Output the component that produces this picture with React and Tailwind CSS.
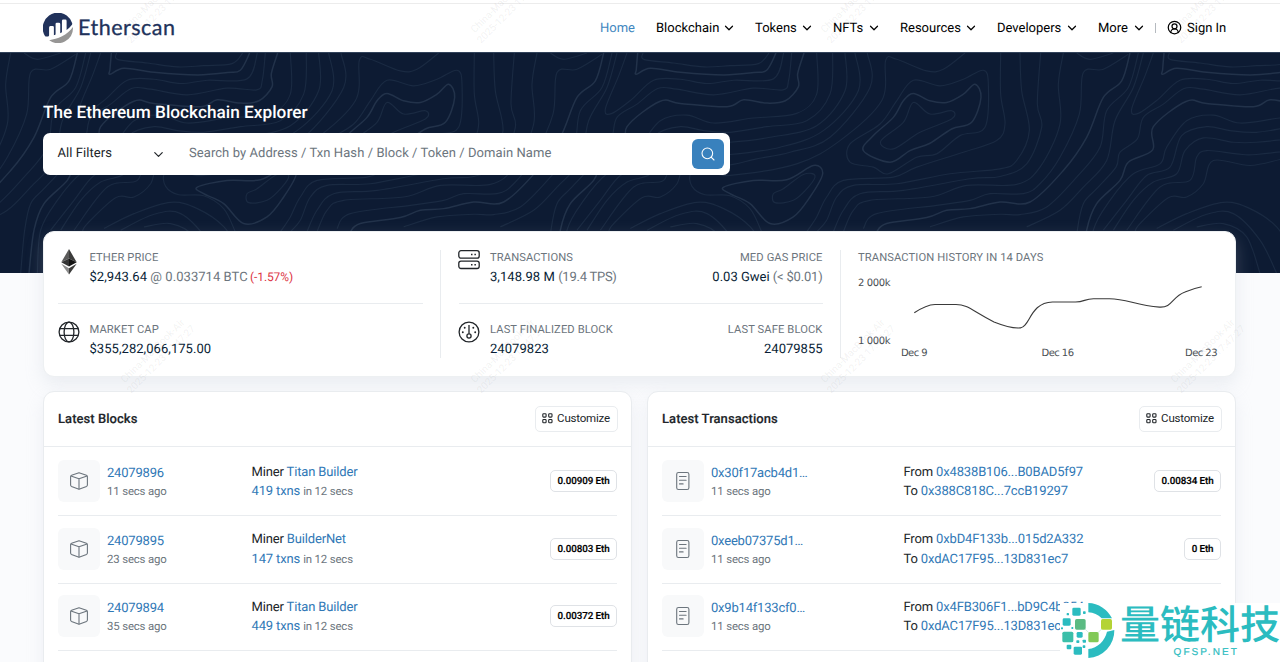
import React from 'react'
import { ChevronDown, CircleUserRound, Search } from 'lucide-react'

const NAV = [
  { label: 'Blockchain', width: 'w-[62px]' },
  { label: 'Tokens', width: 'w-[41px]' },
  { label: 'NFTs', width: 'w-[30px]' },
  { label: 'Resources', width: 'w-[60px]' },
  { label: 'Developers', width: 'w-[64px]' },
  { label: 'More', width: 'w-[30px]' },
]

const BLOCKS = [
  { number: '24079896', age: '11 secs ago', miner: 'Titan Builder', txns: '419 txns', reward: '0.00909 Eth' },
  { number: '24079895', age: '23 secs ago', miner: 'BuilderNet', txns: '147 txns', reward: '0.00803 Eth' },
  { number: '24079894', age: '35 secs ago', miner: 'Titan Builder', txns: '449 txns', reward: '0.00372 Eth' },
]

const TRANSACTIONS = [
  { hash: '0x30f17acb4d1…', age: '11 secs ago', from: '0x4838B106...B0BAD5f97', to: '0x388C818C...7ccB19297', value: '0.00834 Eth' },
  { hash: '0xeeb07375d1…', age: '11 secs ago', from: '0xbD4F133b...015d2A332', to: '0xdAC17F95...13D831ec7', value: '0 Eth' },
  { hash: '0x9b14f133cf0…', age: '11 secs ago', from: '0x4FB306F1...bD9C4b354', to: '0xdAC17F95...13D831ec7', value: null },
]

// Contour lines of one map tile. bold marks the index contours.
const TILE = 1579
const CONTOURS = [
  { pts: [1318, 6, 1322, 26, 1410, 36, 1500, 48, 1579, 44, 1664, 38, 1696, 6] },
  { bold: true, pts: [1302, 6, 1298, 55, 1298, 70, 1340, 52, 1430, 64, 1560, 72, 1650, 65, 1689, 58, 1717, 6] },
  { pts: [1270, 6, 1245, 75, 1205, 175, 1225, 188, 1285, 145, 1350, 88, 1430, 85, 1510, 98, 1590, 88, 1709, 84, 1740, 6] },
  { pts: [1764, 6, 1755, 88, 1738, 117, 1649, 112, 1530, 132, 1420, 115, 1362, 113, 1300, 160, 1240, 200, 1222, 265, 1170, 305, 1158, 350, 1100, 415, 1060, 460, 1042, 540, 1030, 670] },
  { bold: true, pts: [1801, 6, 1782, 68, 1784, 108, 1745, 150, 1689, 157, 1620, 147, 1570, 168, 1430, 158, 1368, 152, 1270, 228, 1268, 298, 1195, 335, 1170, 390, 1100, 460, 1070, 540, 1055, 670] },
  { pts: [1839, 6, 1839, 130, 1779, 188, 1649, 202, 1530, 217, 1450, 193, 1370, 210, 1310, 290, 1290, 340, 1210, 370, 1140, 450, 1090, 540, 1080, 670] },
  { pts: [1887, 6, 1879, 130, 1809, 210, 1689, 228, 1579, 245, 1500, 240, 1430, 228, 1355, 255, 1320, 350, 1250, 375, 1190, 450, 1120, 540] },
  { pts: [1924, 6, 1924, 120, 1839, 225, 1699, 260, 1579, 275, 1510, 275, 1420, 262, 1365, 300, 1340, 370, 1270, 395, 1210, 450, 1150, 540] },
  { pts: [1954, 6, 1964, 120, 1859, 240, 1729, 290, 1579, 312, 1520, 310, 1430, 300, 1400, 320, 1380, 390, 1290, 410, 1190, 540] },
  { pts: [1991, 6, 1999, 110, 1879, 260, 1759, 305, 1659, 325, 1560, 345, 1450, 330, 1420, 400, 1370, 440, 1315, 442, 1230, 520, 1215, 545] },
  { pts: [705, 6, 640, 55, 590, 60, 500, 25, 467, 28, 455, 150, 330, 270, 200, 340, 0, 375, -50, 365, -115, 368, -114, 408, -75, 433, 0, 436, 60, 475, 95, 545] },
  { bold: true, closed: true, pts: [-19, 410, 70, 390, 170, 388, 250, 345, 278, 370, 240, 440, 190, 500, 120, 520, 60, 460, 0, 430] },
  { closed: true, pts: [130, 430, 160, 415, 220, 372, 255, 375, 235, 410, 190, 450, 135, 457] },
  { pts: [1280, 535, 1370, 490, 1480, 456, 1560, 475, 1640, 530, 1680, 600, 1710, 670] },
  { pts: [1330, 540, 1430, 492, 1510, 490, 1590, 570, 1640, 670] },
  { pts: [1400, 530, 1480, 520, 1550, 560, 1590, 670] },
  { bold: true, closed: true, pts: [550, 128, 600, 150, 650, 155, 700, 130, 735, 100, 753, 140, 725, 215, 665, 235, 600, 278, 540, 300, 480, 335, 400, 300, 430, 255, 490, 200, 520, 150] },
  { closed: true, pts: [550, 155, 600, 190, 665, 180, 665, 205, 570, 245, 490, 295, 452, 272, 520, 215] },
  { closed: true, pts: [550, 88, 630, 105, 700, 85, 760, 58, 775, 100, 765, 230, 690, 255, 620, 310, 560, 320, 475, 370, 430, 350, 360, 335, 360, 280, 450, 220, 500, 150] },
  { pts: [812, 6, 812, 130, 825, 220, 800, 270, 700, 305, 560, 350, 490, 380, 340, 390, 290, 440, 260, 500, 230, 545] },
  { pts: [870, 6, 875, 120, 898, 240, 860, 330, 810, 355, 660, 370, 500, 400, 370, 405, 320, 440, 290, 510, 260, 545] },
  { pts: [932, 6, 922, 160, 935, 230, 890, 340, 810, 378, 720, 385, 520, 420, 390, 430, 340, 480, 310, 545] },
  { pts: [1000, 6, 985, 100, 990, 220, 930, 350, 860, 402, 710, 405, 600, 440, 420, 450, 370, 480, 340, 545] },
  { pts: [1195, 10, 1120, 55, 1060, 65, 1048, 190, 990, 320, 930, 400, 880, 430, 780, 430, 720, 450, 620, 465, 440, 490, 400, 535] },
  { bold: true, pts: [1200, 6, 1175, 90, 1120, 140, 1070, 260, 1000, 360, 900, 455, 810, 455, 720, 475, 650, 480, 590, 502, 470, 520, 440, 545] },
  { pts: [1225, 6, 1195, 110, 1130, 180, 1110, 290, 1040, 380, 950, 470, 870, 493, 810, 492, 700, 500, 600, 530] },
  { pts: [1240, 6, 1210, 110, 1155, 210, 1130, 330, 1060, 410, 990, 480, 890, 530] },
  { pts: [1040, 6, 1080, 25, 1150, 6] },
]

function smooth({ pts, closed }) {
  const n = pts.length / 2
  const at = i => {
    const k = closed ? (i + n) % n : Math.min(Math.max(i, 0), n - 1)
    return [pts[k * 2], pts[k * 2 + 1]]
  }
  let d = `M${at(0).join(' ')}`
  for (let i = 0; i < (closed ? n : n - 1); i++) {
    const [a, b, c, e] = [at(i - 1), at(i), at(i + 1), at(i + 2)]
    d += `C${b[0] + (c[0] - a[0]) / 6} ${b[1] + (c[1] - a[1]) / 6} ${c[0] - (e[0] - b[0]) / 6} ${c[1] - (e[1] - b[1]) / 6} ${c[0]} ${c[1]}`
  }
  return closed ? d + 'Z' : d
}

function ContourMap() {
  return (
    <svg className="absolute inset-0 w-full h-full" viewBox="0 6 3840 663" preserveAspectRatio="none" fill="none">
      <defs>
        <g id="contours">
          {CONTOURS.map((line, i) => (
            <path
              key={i}
              d={smooth(line)}
              stroke={line.bold ? '#22324a' : '#1a2a42'}
              strokeWidth={line.bold ? 4.5 : 3.5}
            />
          ))}
        </g>
      </defs>
      {[-968 - TILE, -968, 611, 2190].map(x => (
        <use key={x} href="#contours" x={x} />
      ))}
    </svg>
  )
}

function EtherscanMark() {
  return (
    <svg className="w-[30px] h-[30px]" viewBox="0 0 293.775 293.671">
      <path
        fill="#21325b"
        d="M61.055 139.4a12.4 12.4 0 0 1 12.458-12.459l20.656.068a12.467 12.467 0 0 1 12.467 12.467v78.114c2.326-.69 5.313-1.426 8.581-2.2a10.389 10.389 0 0 0 8.006-10.11v-96.923a12.469 12.469 0 0 1 12.467-12.47h20.7a12.469 12.469 0 0 1 12.467 12.468v89.837s5.183-2.1 10.231-4.229a10.405 10.405 0 0 0 6.359-9.589V77.246a12.467 12.467 0 0 1 12.465-12.467h20.7a12.468 12.468 0 0 1 12.488 12.467v88.402c17.945-13.006 36.13-28.647 50.561-47.454a20.927 20.927 0 0 0 3.185-19.537 146.6 146.6 0 0 0-278.9-1.63 146.6 146.6 0 0 0 12.084 124.6 18.573 18.573 0 0 0 17.691 9.162c3.93-.346 8.823-.835 14.642-1.517a10.388 10.388 0 0 0 9.209-10.316V139.4"
      />
      <path
        fill="#979695"
        d="M60.609 266.2A146.562 146.562 0 0 0 293.775 147.1c0-3.382-.157-6.727-.381-10.049-53.642 80-152.686 117.405-232.79 129.134"
      />
    </svg>
  )
}

function EtherIcon() {
  return (
    <svg className="-mt-px w-[22px] h-[26px]" viewBox="0 0 22 26">
      <path fill="#5b5b5b" d="M11 0 3.3 13.2 11 9.6z" />
      <path fill="#3c3c3b" d="M11 0v9.6l7.7 3.6z" />
      <path fill="#343434" d="M3.3 13.2 11 17.6V9.6z" />
      <path fill="#141414" d="m18.7 13.2-7.7 4.4V9.6z" />
      <path fill="#8c8c8c" d="M3.3 14.8 11 25.5v-6.2z" />
      <path fill="#3c3c3b" d="M18.7 14.8 11 25.5v-6.2z" />
    </svg>
  )
}

function GlobeIcon() {
  return (
    <svg className="-mt-px w-[22px] h-[22px]" viewBox="0 0 22 22" fill="none" stroke="#212529" strokeWidth="1.3">
      <circle cx="11" cy="11" r="9.9" />
      <ellipse cx="11" cy="11" rx="4.9" ry="9.9" />
      <path d="M2 7.6h18M2 14.4h18" />
    </svg>
  )
}

function ServerIcon() {
  return (
    <svg className="-mt-px w-[22px] h-[22px]" viewBox="0 0 22 22" fill="none" stroke="#212529" strokeWidth="1.3">
      <rect x=".8" y="1.7" width="20.4" height="7.4" rx="2.2" />
      <rect x=".8" y="12.1" width="20.4" height="7.4" rx="2.2" />
      <path strokeWidth="1.5" d="M13 5.4h1.5M16.4 5.4h1.5M13 15.8h1.5M16.4 15.8h1.5" />
    </svg>
  )
}

function GaugeIcon() {
  return (
    <svg className="-mt-px w-[22px] h-[22px]" viewBox="0 0 22 22" fill="none" stroke="#212529" strokeWidth="1.3">
      <circle cx="11" cy="11" r="9.9" />
      <circle cx="11" cy="15" r="2.1" />
      <path d="M11 4v8.8" />
      <g fill="#212529" stroke="none">
        <circle cx="6.7" cy="6.7" r=".95" />
        <circle cx="15.3" cy="6.7" r=".95" />
        <circle cx="4.8" cy="11.2" r=".95" />
        <circle cx="17.2" cy="11.2" r=".95" />
      </g>
    </svg>
  )
}

function CubeIcon() {
  return (
    <svg className="w-[20px] h-[20px]" viewBox="0 0 20 20" fill="none" stroke="#6c757d" strokeWidth="1.1" strokeLinejoin="round">
      <path d="M10 1.8 17.4 4.3q1 .4 1 1.4v8.4q0 .9-.9 1.3L10 18.2l-7.5-2.8q-.9-.4-.9-1.3V5.7q0-1 1-1.4z" />
      <path d="M1.9 4.9 10 7.8l8.1-2.9M10 7.8v10.4" />
    </svg>
  )
}

function PaperIcon() {
  return (
    <svg className="w-[20px] h-[20px]" viewBox="0 0 20 20" fill="none" stroke="#6c757d" strokeWidth="1.1" strokeLinecap="round">
      <rect x="3.7" y="1.5" width="12.2" height="17" rx="1.8" />
      <path d="M6.5 5.5h6.6M6.5 9.2h6.6M6.5 12.9h3.6" />
    </svg>
  )
}

function GridIcon() {
  return (
    <svg className="w-[11px] h-[11px]" viewBox="0 0 11 11" fill="none" stroke="#212529" strokeWidth="1.1">
      <rect x=".8" y=".8" width="3.3" height="3.3" rx=".8" />
      <rect x="6.7" y=".8" width="3.3" height="3.3" rx=".8" />
      <rect x=".8" y="6.5" width="3.3" height="3.3" rx=".8" />
      <rect x="6.7" y="6.5" width="3.3" height="3.3" rx=".8" />
    </svg>
  )
}

function Header() {
  return (
    <header className="h-[52px] shrink-0 bg-white pt-[3px]">
      <div className="h-px bg-[#ececec]" />
      <div className="flex h-[47px] items-center justify-between pl-[43px] pr-[54px]">
        <div className="flex items-center gap-[5px]">
          <EtherscanMark />
          <span className="w-[98px] whitespace-nowrap font-['Lato'] text-[21.5px] leading-none tracking-[0.5px] text-[#21325b] [-webkit-text-stroke:0.3px_#21325b]">
            Etherscan
          </span>
        </div>
        <nav className="flex items-center text-[13px] text-black">
          <a className="mr-[21px] w-[35px] pt-[2px] text-[#3f87c0]">Home</a>
          {NAV.map(item => (
            <a key={item.label} className="mr-[19px] flex items-center gap-[4px] last-of-type:mr-0">
              <span className={`${item.width} whitespace-nowrap pt-[2px]`}>{item.label}</span>
              <ChevronDown size={14} strokeWidth={2.1} />
            </a>
          ))}
          <span className="ml-[9px] h-[10px] w-px bg-[#b5babf]" />
          <div className="ml-[11px] flex items-center gap-[5px]">
            <CircleUserRound size={15} strokeWidth={2} />
            <span className="w-[39px] whitespace-nowrap pt-[2px]">Sign In</span>
          </div>
        </nav>
      </div>
    </header>
  )
}

function Hero() {
  return (
    <section className="relative h-[221px] shrink-0 border-t border-[#31425a] bg-[#0d1b33]">
      <ContourMap />
      <div className="relative pl-[43px] pt-[50px]">
        <h1 className="text-[17.2px] font-medium leading-[20px] tracking-[0.03px] text-white">The Ethereum Blockchain Explorer</h1>
        <div className="mt-[10px] flex h-[42px] w-[687px] items-center rounded-[7px] bg-white pl-[14.5px] pr-[6px] text-[13px] tracking-[0.07px]">
          <span className="w-[94px] pb-px text-[#212529]">All Filters</span>
          <ChevronDown size={15} strokeWidth={1.9} className="-mx-px text-[#212529]" />
          <span className="ml-[24.5px] flex-1 pb-px text-[#6c757d]">
            Search by Address / Txn Hash / Block / Token / Domain Name
          </span>
          <button type="button" className="flex h-[30px] w-[32px] items-center justify-center rounded-[6px] bg-[#3981bd] text-white">
            <Search size={16} strokeWidth={1.6} className="-mt-px" />
          </button>
        </div>
      </div>
    </section>
  )
}

function Stat({ icon, label, children, right }) {
  return (
    <div className="flex">
      <div className="w-[32px] shrink-0 -ml-[0.5px]">{icon}</div>
      <div className="flex-1">
        <div className="pt-px text-[11.2px] leading-[14px] tracking-[0.1px] text-[#6c757d]">{label}</div>
        <div className="mt-[4px] text-[13px] leading-[17px] tracking-[0.05px] text-[#081d35]">{children}</div>
      </div>
      {right && (
        <div className="text-right">
          <div className="pt-px text-[11.2px] leading-[14px] tracking-[0.1px] text-[#6c757d]">{right.label}</div>
          <div className="mt-[4px] text-[13px] leading-[17px] text-[#081d35]">{right.value}</div>
        </div>
      )}
    </div>
  )
}

function HistoryChart() {
  return (
    <svg className="mt-[5px] h-[92px] w-[364px]" viewBox="0 0 364 92" fill="none">
      <g fill="#4a4f54" className="font-['DejaVu_Sans'] text-[10px]">
        <text x="0" y="16" textLength="32.5">2 000k</text>
        <text x="0" y="74" textLength="32.5">1 000k</text>
        <text x="43" y="86.3" textLength="26.5">Dec 9</text>
        <text x="183.5" y="86.3" textLength="32.5">Dec 16</text>
        <text x="327" y="86.3" textLength="32.5">Dec 23</text>
      </g>
      <path
        stroke="#3a3a3a"
        strokeWidth="1.1"
        d="M56.3 42.8C62 39 69 34.7 77 34.5H98c12 0 17 7 38 17.5C146 56 156 58.5 162.5 57.9c9.5-1 9.5-25.5 32-25.9h23c9 0 9-3.2 18-3.3h16c18 0 26 7 50 8.4 13 .8 12-10.1 25.5-15.1 7-3 13-4.6 16.7-5.3"
      />
    </svg>
  )
}

function StatsCard() {
  return (
    <section className="flex h-[146px] shrink-0 rounded-[11px] border border-[#edf0f2] bg-white pl-[14px] pt-[18px] shadow-[0_7px_17px_rgba(189,197,209,0.25)]">
      <div className="h-[108px] w-[383px] shrink-0 border-r border-[#e9ecef] pr-[17px]">
        <div className="h-[54px] border-b border-[#e9ecef]">
          <Stat icon={<EtherIcon />} label="ETHER PRICE">
            $2,943.64 <span className="text-[#6c757d]">@ 0.033714 BTC</span>{' '}
            <span className="-ml-px text-[12px] tracking-[-0.1px] text-[#dc3545]">(-1.57%)</span>
          </Stat>
        </div>
        <div className="pt-[18px]">
          <Stat icon={<GlobeIcon />} label="MARKET CAP">$355,282,066,175.00</Stat>
        </div>
      </div>
      <div className="ml-[17.5px] h-[108px] w-[382px] shrink-0 border-r border-[#e9ecef] pr-[17px]">
        <div className="h-[54px] border-b border-[#e9ecef]">
          <Stat
            icon={<ServerIcon />}
            label="TRANSACTIONS"
            right={{
              label: 'MED GAS PRICE',
              value: <>0.03 Gwei <span className="tracking-[-0.2px] text-[#6c757d]">(&lt; $0.01)</span></>,
            }}
          >
            3,148.98 M <span className="tracking-[-0.25px] text-[#6c757d]">(19.4 TPS)</span>
          </Stat>
        </div>
        <div className="pt-[18px]">
          <Stat icon={<GaugeIcon />} label="LAST FINALIZED BLOCK" right={{ label: 'LAST SAFE BLOCK', value: '24079855' }}>
            24079823
          </Stat>
        </div>
      </div>
      <div className="ml-[17.5px] shrink-0">
        <div className="pt-px text-[11.2px] leading-[14px] tracking-[0.1px] text-[#6c757d]">TRANSACTION HISTORY IN 14 DAYS</div>
        <HistoryChart />
      </div>
    </section>
  )
}

function Panel({ title, children }) {
  return (
    <section className="h-[320px] w-[589px] rounded-[11px] border border-[#e9ecef] bg-white shadow-[0_7px_17px_rgba(189,197,209,0.2)]">
      <div className="flex h-[55px] items-center justify-between border-b border-[#e9ecef] pl-[14px] pr-[13.5px] pb-px">
        <h2 className="pt-[2px] text-[13px] font-medium tracking-[0.05px] text-[#212529] [-webkit-text-stroke:0.15px_#212529]">{title}</h2>
        <button type="button" className="flex h-[26px] w-[83px] items-center justify-center gap-[4px] rounded-[5px] border border-[#e9ecef] text-[11.5px] tracking-[-0.2px] text-[#212529]">
          <GridIcon />
          Customize
        </button>
      </div>
      <div className="px-[14px] pt-[1.5px]">{children}</div>
    </section>
  )
}

function Row({ icon, title, age, middle, badge, titleWidth }) {
  return (
    <div className="flex h-[67.5px] items-center border-b border-[#e9ecef] pb-[1.5px] text-[13px] tracking-[-0.15px] text-[#212529]">
      <div className="flex h-[42px] w-[42px] items-center justify-center rounded-[6px] bg-[#f8f9fa]">{icon}</div>
      <div className={`${titleWidth} ml-[7px] pt-[2px]`}>
        <div className="pt-px leading-[18px] tracking-[-0.2px] text-[#3078b6]">{title}</div>
        <div className="-mt-px text-[11.4px] leading-[18px] text-[#6c757d]">{age}</div>
      </div>
      <div className="flex-1 whitespace-nowrap pt-[2px] leading-[19.5px]">{middle}</div>
      {badge && (
        <span className="rounded-[5px] border border-[#dfe2e6] px-[6.5px] pt-px text-[9.8px] font-medium leading-[19px] tracking-[-0.08px] text-black [-webkit-text-stroke:0.2px_#000]">
          {badge}
        </span>
      )}
    </div>
  )
}

function DeviceStamp({ className }) {
  return (
    <div className={`${className} pointer-events-none absolute -rotate-45 whitespace-nowrap text-center text-[10px] leading-[12px] text-[#777777]/10`}>
      China-MacBook-Air
      <br />
      2025-12-23 17:47:27
    </div>
  )
}

function SiteBadge() {
  return (
    <div className="absolute bottom-0 right-0 flex h-[59px] w-[220px] bg-white">
      <svg className="h-[59px] w-[58px] shrink-0" viewBox="60 39 174 177" fill="#2bbcc0">
        <path d="M145 39a82 82 0 0 1 71 46h-31a62 62 0 0 0-40-18z" />
        <path d="M223 120a82 82 0 0 1-78 84v-27c28-3 50-25 56-52z" />
        <path d="M120 103 160 141 199 104" fill="none" stroke="#a8dcc0" strokeWidth="1.5" />
        <rect x="97" y="53" width="25" height="24" rx="4" />
        <rect x="68" y="85" width="24" height="22" rx="4" />
        <rect x="105" y="87" width="32" height="32" rx="5" fill="#5bbb83" />
        <rect x="183" y="87" width="33" height="32" rx="5" fill="#b4d335" />
        <rect x="67" y="125" width="33" height="32" rx="5" fill="#3bbfa9" />
        <rect x="145" y="126" width="31" height="31" rx="5" fill="#82c957" />
        <rect x="110" y="126" width="18" height="17" rx="4" />
        <rect x="80" y="164" width="14" height="14" rx="3" />
        <rect x="101" y="170" width="25" height="24" rx="4" />
        <rect x="128" y="149" width="10" height="9" rx="2" />
        <rect x="109" y="151" width="9" height="8" rx="2" />
        <rect x="128" y="166" width="8" height="8" rx="2" />
        <rect x="80" y="69" width="7" height="7" rx="2" />
        <rect x="129" y="64" width="8" height="8" rx="2" />
        <rect x="63" y="112" width="6" height="6" rx="2" />
        <rect x="94" y="111" width="6" height="6" rx="2" />
      </svg>
      <div className="ml-[2px] w-[160px] text-[#2bbcc0]">
        <div className="whitespace-nowrap font-['Noto_Sans_CJK_SC',sans-serif] text-[40px] font-medium leading-[38px]">量链科技</div>
        <div className="pl-[53.5px] pt-[4.5px] font-['Liberation_Sans',sans-serif] text-[10px] leading-[14px] tracking-[2.1px] [-webkit-text-stroke:0.2px_#2bbcc0]">
          QFSP.NET
        </div>
      </div>
    </div>
  )
}

export default function App() {
  return (
    <div className="relative flex h-[662px] w-[1280px] flex-col overflow-hidden bg-[#fafbfd] font-['Roboto',sans-serif] [text-rendering:geometricPrecision]">
      <Header />
      <Hero />
      <main className="relative mx-[43px] -mt-[42px] w-[1193px]">
        <StatsCard />
        <div className="mt-[14px] flex justify-between">
          <Panel title="Latest Blocks">
            {BLOCKS.map(block => (
              <Row
                key={block.number}
                icon={<CubeIcon />}
                title={block.number}
                age={block.age}
                titleWidth="w-[144.5px]"
                badge={block.reward}
                middle={
                  <>
                    <div>Miner <span className="text-[#3078b6]">{block.miner}</span></div>
                    <div>
                      <span className="text-[#3078b6]">{block.txns}</span>{' '}
                      <span className="text-[11.4px] text-[#6c757d]">in 12 secs</span>
                    </div>
                  </>
                }
              />
            ))}
          </Panel>
          <Panel title="Latest Transactions">
            {TRANSACTIONS.map(tx => (
              <Row
                key={tx.hash}
                icon={<PaperIcon />}
                title={tx.hash}
                age={tx.age}
                titleWidth="w-[192.5px]"
                badge={tx.value}
                middle={
                  <>
                    <div>From <span className="text-[#3078b6]">{tx.from}</span></div>
                    <div>To <span className="text-[#3078b6]">{tx.to}</span></div>
                  </>
                }
              />
            ))}
          </Panel>
        </div>
      </main>
      <DeviceStamp className="left-[112px] top-[344px]" />
      <DeviceStamp className="left-[462px] top-[344px]" />
      <DeviceStamp className="left-[812px] top-[344px]" />
      <DeviceStamp className="left-[1162px] top-[344px]" />
      <DeviceStamp className="left-[112px] top-[-6px]" />
      <DeviceStamp className="left-[462px] top-[-6px]" />
      <DeviceStamp className="left-[812px] top-[-6px]" />
      <DeviceStamp className="left-[1162px] top-[-6px]" />
      <SiteBadge />
    </div>
  )
}
